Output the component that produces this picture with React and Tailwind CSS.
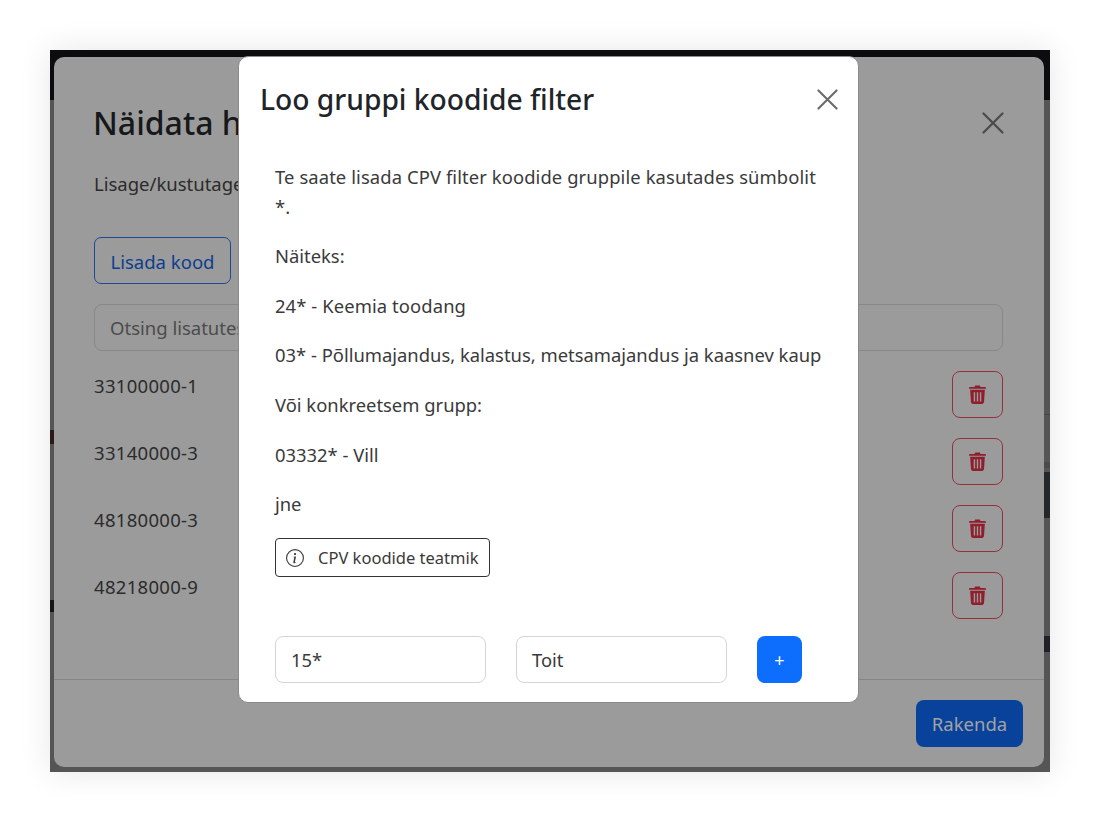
import React from "react";

const FONT = "font-['Noto_Sans','Open_Sans',sans-serif]";

function Close({ className }) {
  return (
    <svg viewBox="0 0 22 22" className={className} fill="none" stroke="currentColor" strokeWidth="2.2" strokeLinecap="round">
      <path d="M1.5 1.5 20.5 20.5M20.5 1.5 1.5 20.5" />
    </svg>
  );
}

function Trash() {
  return (
    <svg viewBox="0 0 18 20" className="w-[17px] h-[19px] text-[#8f1f2d]" fill="currentColor">
      <path d="M6.5 0.5h5l.7 1.5h4.6c.6 0 1.2.5 1.2 1.2v.8H0v-.8C0 2.5.6 2 1.2 2h4.6z" />
      <path fillRule="evenodd" d="M1.2 5h15.6l-.9 13c-.1 1.1-1 2-2.1 2H4.200c-1.100 0-2-.9-2.100-2zM5 7.500v10h1.500v-10zM8.250 7.500v10h1.500v-10zM11.500 7.500v10H13v-10z" />
    </svg>
  );
}

function Row({ code, mb }) {
  return (
    <div className={`flex justify-between items-start ${mb}`}>
      <span className="text-[18.5px] tracking-[0.3px] leading-[30px] text-[#2b2b2b]">{code}</span>
      <button className="w-[51px] h-[47px] rounded-[8px] border border-[#96303f] flex items-center justify-center">
        <Trash />
      </button>
    </div>
  );
}

export default function App() {
  return (
    <div className={`w-[1100px] h-[822px] bg-white pt-[50px] pl-[50px] ${FONT}`}>
      <div className="relative w-[1000px] h-[722px] overflow-hidden bg-[#555555] shadow-[0_0_30px_rgba(0,0,0,0.1)]">
        {/* page behind the backdrop */}
        <div className="h-[50px] bg-[#0c0c0e]" />
        <div className="absolute right-0 top-[364px] w-[6px] h-px bg-[#444444]" />
        <div className="absolute right-0 top-[412px] w-[6px] h-[6px] bg-[#4a4a4a]" />
        <div className="absolute right-0 top-[422px] w-[6px] h-[46px] bg-[#24282b]" />
        <div className="absolute left-0 top-[380px] w-[4px] h-[14px] bg-[#2a1a1c]" />
        <div className="absolute left-0 top-[550px] w-[4px] h-[12px] bg-[#151515]" />
        <div className="absolute right-0 top-[586px] w-[6px] h-[16px] bg-[#202028]" />

        {/* behind modal */}
        <div className="absolute left-[4px] top-[7px] w-[990px] h-[710px] rounded-[10px] bg-[#9b9b9b] flex flex-col">
          <div className="flex items-center justify-between pl-[39px] pr-[40px] pt-[34px] h-[98px]">
            <h2 className="text-[32px] leading-[44px] font-medium text-[#16181a] whitespace-nowrap">Näidata h</h2>
            <Close className="w-[22px] h-[22px] text-[#4b4b4b]" />
          </div>
          <div className="flex-1 px-[40px] pr-[41px]">
            <p className="text-[18.5px] leading-[30px] mt-[14px] text-[#2b2b2b]">Lisage/kustutage</p>
            <button className="mt-[38px] w-[137px] h-[47px] pt-[3px] rounded-[7px] border border-[#1c4a94] text-[18.5px] text-[#0b3f8f]">Lisada kood</button>
            <div className="mt-[20px] h-[47px] pt-[1px] rounded-[8px] border border-[#888888] px-[15px] flex items-center text-[18.5px] text-[#4c4c4c]">Otsing lisatutes</div>
            <div className="mt-[20px] flex flex-col">
              <Row code="33100000-1" mb="mb-[20px]" />
              <Row code="33140000-3" mb="mb-[20px]" />
              <Row code="48180000-3" mb="mb-[20px]" />
              <Row code="48218000-9" mb="" />
            </div>
          </div>
          <div className="h-[88px] border-t border-[#858585] flex items-start justify-end pt-[20px] pr-[21px]">
            <button className="w-[107px] h-[47px] rounded-[8px] bg-[#08429a] text-[18.5px] text-[#a3a3a3]">Rakenda</button>
          </div>
        </div>

        {/* front modal */}
        <div className="absolute left-[188px] top-[6px] w-[621px] h-[647px] rounded-[10px] bg-white border border-[#8a8a8a]">
          <div className="flex items-center justify-between h-[84px] pl-[21px] pr-[20px]">
            <h2 className="text-[28.2px] leading-[38px] font-medium text-[#212529] whitespace-nowrap">Loo gruppi koodide filter</h2>
            <Close className="w-[21px] h-[21px] text-[#6b6b6b]" />
          </div>
          <div className="pl-[36px] pr-[32px] pt-[21px] text-[18.4px] leading-[30px] text-[#3a3a3a]">
            <p className="tracking-[0.1px]">Te saate lisada CPV filter koodide gruppile kasutades sümbolit *.</p>
            <p className="mt-[19px]">Näiteks:</p>
            <p className="mt-[19.7px] tracking-[0.1px]">24* - Keemia toodang</p>
            <p className="mt-[19.7px]">03* - Põllumajandus, kalastus, metsamajandus ja kaasnev kaup</p>
            <p className="mt-[19.7px]">Või konkreetsem grupp:</p>
            <p className="mt-[19.7px]">03332* - Vill</p>
            <p className="mt-[19.7px]">jne</p>
            <button className="mt-[19px] w-[215px] h-[39px] rounded-[4px] border border-[#333333] flex items-center pl-[10px] text-[16.5px] text-[#3a3a3a]">
              <svg viewBox="0 0 16 16" className="w-[18px] h-[18px] mr-[14px]" fill="currentColor">
                <path d="M8 15A7 7 0 1 1 8 1a7 7 0 0 1 0 14zm0 1A8 8 0 1 0 8 0a8 8 0 0 0 0 16z" />
                <path d="m8.930 6.588-2.290.287-.082.380.450.083c.294.070.352.176.288.469l-.738 3.468c-.194.897.105 1.319.808 1.319.545 0 1.178-.252 1.465-.598l.088-.416c-.200.176-.492.246-.686.246-.275 0-.375-.193-.304-.533L8.930 6.588zM9 4.500a1 1 0 1 1-2 0 1 1 0 0 1 2 0z" />
              </svg>
              CPV koodide teatmik
            </button>
            <div className="mt-[59px] flex items-center">
              <div className="w-[211px] h-[47px] rounded-[8px] border border-[#d0d5e0] px-[15px] flex items-center text-[#3a3a3a]">15*</div>
              <div className="ml-[30px] w-[211px] h-[47px] rounded-[8px] border border-[#d0d5e0] px-[15px] flex items-center text-[#3a3a3a]">Toit</div>
              <button className="ml-[30px] w-[45px] h-[47px] rounded-[8px] bg-[#0d6efd] text-white text-[18px]">+</button>
            </div>
          </div>
        </div>
      </div>
    </div>
  );
}
